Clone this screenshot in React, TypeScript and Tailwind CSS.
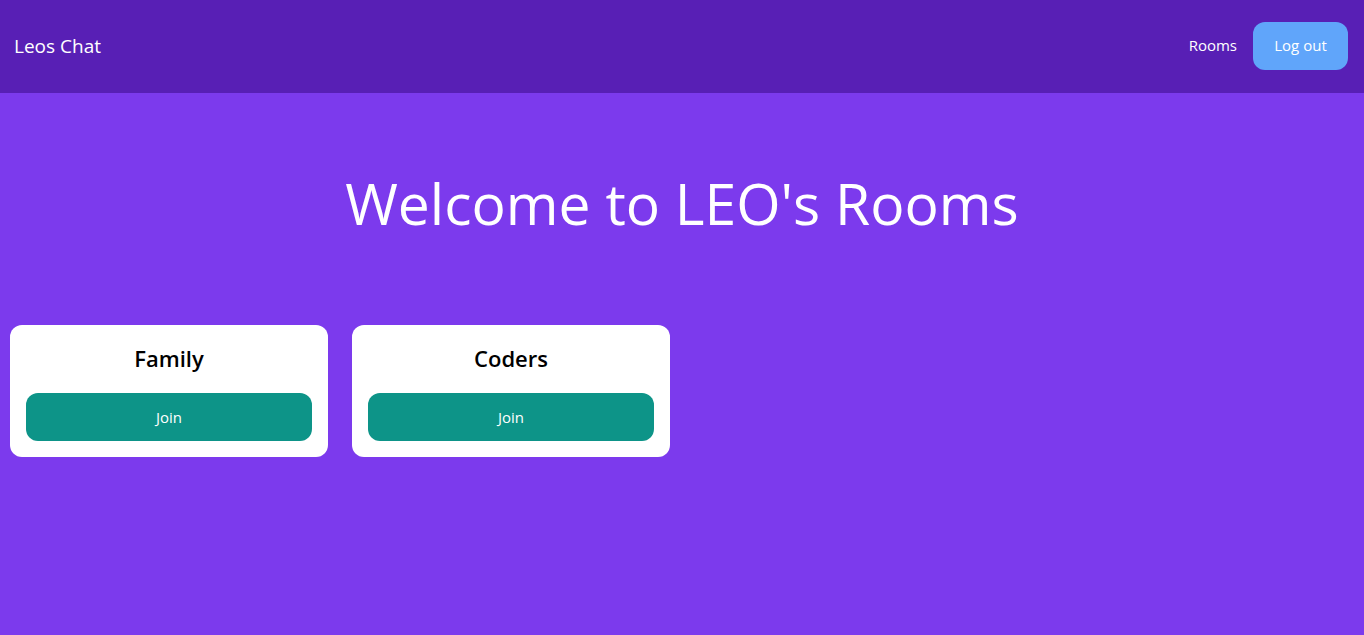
import React from 'react';

const rooms = [
  { id: 'family', name: 'Family' },
  { id: 'coders', name: 'Coders' },
];

export default function App() {
  return (
    <div className="min-h-[635px] bg-[#7c3aed] font-['Open_Sans',sans-serif] text-white">
      <nav className="flex h-[93px] items-center justify-between bg-[#581fb5] pl-[14px] pr-4">
        <span className="text-[19px]">Leos Chat</span>
        <div className="-mt-0.5 flex items-center gap-4">
          <a className="text-[15px]">Rooms</a>
          <button className="h-12 w-[95px] rounded-xl bg-[#60a5fa] text-[15px] text-white">Log out</button>
        </div>
      </nav>

      <h1 className="mt-[82px] text-center text-[57px] leading-none">Welcome to LEO's Rooms</h1>

      <ul className="mt-[93px] grid grid-cols-4 gap-6 px-2.5">
        {rooms.map((room) => (
          <li key={room.id} className="flex flex-col rounded-xl bg-white p-4 text-black">
            <h2 className="mb-5 mt-0.5 text-center text-[22px] font-semibold leading-[30px]">{room.name}</h2>
            <button className="h-12 rounded-xl bg-[#0d9488] text-[15px] text-white">Join</button>
          </li>
        ))}
      </ul>
    </div>
  );
}
